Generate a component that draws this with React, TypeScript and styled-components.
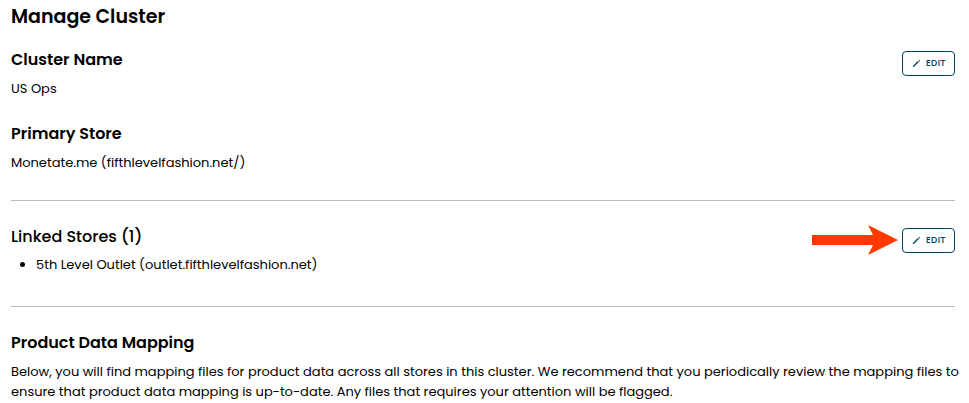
import React from "react";
import styled, { createGlobalStyle } from "styled-components";

const Global = createGlobalStyle`
  *, *::before, *::after { box-sizing: border-box; }
  body { margin: 0; background: #fff; color: #000; font-family: Poppins, Inter, sans-serif; font-size: 13px; font-weight: 400; line-height: 20px; }
`;
const Page = styled.main`padding: 4px 14px 0 11px;`;
const Title = styled.h1`margin: 0 0 20px; font-size: 19px; line-height: 26px; font-weight: 600;`;
const Section = styled.section`
  display: flex; justify-content: space-between; align-items: flex-start;
`;
const Details = styled.div`flex: 1; min-width: 0;`;
const Heading = styled.h2<{ $weight?: number }>`
  margin: 0 0 9px; font-size: 16px; line-height: 20px; font-weight: ${(p) => p.$weight ?? 600};
`;
const Text = styled.p`margin: 0;`;
const Intro = styled(Text)`margin-right: -12px;`;
const Field = styled.div`& + & { margin-top: 25px; }`;
const LinkedHeading = styled(Heading)`margin-bottom: 8px;`;
const List = styled.ul`margin: 0; padding-left: 25px;`;
const Rule = styled.hr<{ $top: number }>`margin: ${(p) => p.$top}px 0 26px; border: 0; border-top: 1px solid #bbb;`;
const Actions = styled.div`display: flex; align-items: center; gap: 4px; padding-top: 1px;`;
const ArrowActions = styled(Actions)`padding-top: 0; margin-top: -2px;`;
const EditButton = styled.button`
  display: flex; align-items: center; justify-content: center; gap: 5px; width: 53px; height: 25px; padding: 0 0 2px;
  border: 1px solid #004466; border-radius: 4px; background: #fff; color: #004466; font: 600 9px "Open Sans", sans-serif;
  svg { margin-top: 2px; }
`;
const Edit = ({ label }: { label: string }) => (
  <EditButton type="button" aria-label={label}>
    <svg width="9" height="9" viewBox="0 0 9 9" fill="#004466" aria-hidden="true">
      <path d="M.7 8.2 1.1 6.7 5.8 2 6.8 3 2.1 7.8zM6.3 1.5 7.1.7 8.1 1.7 7.3 2.5z" />
    </svg>
    EDIT
  </EditButton>
);

export default function App() {
  return (
    <Page>
      <Global />
      <Title>Manage Cluster</Title>
      <Section>
        <Details>
          <Field><Heading>Cluster Name</Heading><Text>US Ops</Text></Field>
          <Field><Heading>Primary Store</Heading><Text>Monetate.me (fifthlevelfashion.net/)</Text></Field>
        </Details>
        <Actions><Edit label="EDIT cluster" /></Actions>
      </Section>
      <Rule $top={27} />
      <Section>
        <Details>
          <LinkedHeading $weight={500}>Linked Stores (1)</LinkedHeading>
          <List><li>5th Level Outlet (outlet.fifthlevelfashion.net)</li></List>
        </Details>
        <ArrowActions>
          <svg width="86" height="30" viewBox="0 0 86 30" fill="#ff3800" aria-hidden="true">
            <path d="M0 10H61L56 0 86 15 56 30 61 20H0z" />
          </svg>
          <Edit label="EDIT linked stores" />
        </ArrowActions>
      </Section>
      <Rule $top={31} />
      <Heading>Product Data Mapping</Heading>
      <Intro>Below, you will find mapping files for product data across all stores in this cluster. We recommend that you periodically review the mapping files to ensure that product data mapping is up-to-date. Any files that requires your attention will be flagged.</Intro>
    </Page>
  );
}
